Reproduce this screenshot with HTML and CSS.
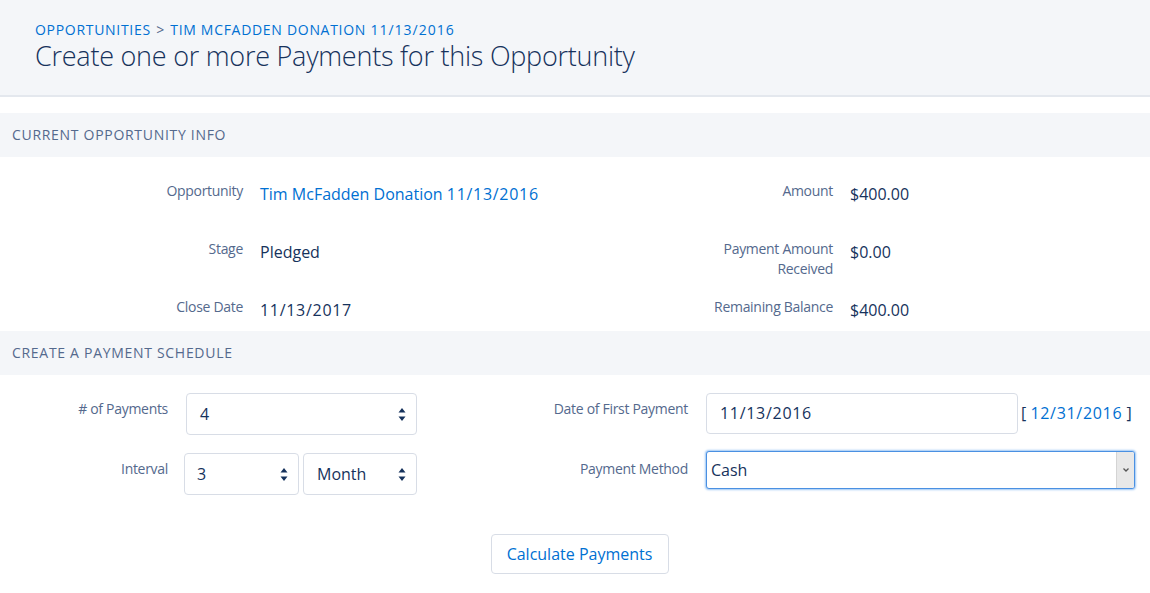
FILE: index.html
```html
<!DOCTYPE html>
<html lang="en">
<head>
<meta charset="utf-8">
<title>Create Payments</title>
<link rel="stylesheet" href="styles.css">
</head>
<body>
<header class="page-header">
  <nav class="crumbs"><a href="#">Opportunities</a> <span class="sep">&gt;</span> <a href="#">Tim McFadden Donation <span class="dt">11/13/2016</span></a></nav>
  <h1 class="title">Create one or more Payments for this Opportunity</h1>
</header>

<section class="section">
  <h2 class="section-title">Current Opportunity Info</h2>
  <div class="info-grid">
    <div class="lbl">Opportunity</div>
    <div class="val"><a href="#">Tim McFadden Donation <span class="dt">11/13/2016</span></a></div>
    <div class="lbl">Amount</div>
    <div class="val">$400.00</div>

    <div class="lbl">Stage</div>
    <div class="val">Pledged</div>
    <div class="lbl">Payment Amount<br>Received</div>
    <div class="val">$0.00</div>

    <div class="lbl">Close Date</div>
    <div class="val"><span class="dt">11/13/2017</span></div>
    <div class="lbl">Remaining Balance</div>
    <div class="val">$400.00</div>
  </div>
</section>

<section class="section">
  <h2 class="section-title">Create a Payment Schedule</h2>
  <div class="form-grid">
    <div class="flbl"># of Payments</div>
    <div class="fctl">
      <div class="box spin wide"><span>4</span>
        <svg class="arrows" width="8" height="15" viewBox="0 0 8 15"><path d="M4 1 L7.5 5.5 L0.5 5.5 Z M0.5 9.5 L7.5 9.5 L4 14 Z" fill="#16325c"/></svg>
      </div>
    </div>
    <div class="flbl">Date of First Payment</div>
    <div class="fctl date-row">
      <div class="box date"><span class="dt">11/13/2016</span></div>
      <span class="bracket">[ <a href="#" class="dt">12/31/2016</a> ]</span>
    </div>

    <div class="flbl">Interval</div>
    <div class="fctl interval">
      <div class="box spin num"><span>3</span>
        <svg class="arrows" width="8" height="15" viewBox="0 0 8 15"><path d="M4 1 L7.5 5.5 L0.5 5.5 Z M0.5 9.5 L7.5 9.5 L4 14 Z" fill="#16325c"/></svg>
      </div>
      <div class="box spin unit"><span>Month</span>
        <svg class="arrows" width="8" height="15" viewBox="0 0 8 15"><path d="M4 1 L7.5 5.5 L0.5 5.5 Z M0.5 9.5 L7.5 9.5 L4 14 Z" fill="#16325c"/></svg>
      </div>
    </div>
    <div class="flbl">Payment Method</div>
    <div class="fctl">
      <div class="select"><span class="sel-text">Cash</span>
        <span class="sel-btn"><svg width="8" height="6" viewBox="0 0 8 6"><path d="M1.5 1.5 L4 4 L6.5 1.5" fill="none" stroke="#555" stroke-width="1.3"/></svg></span>
      </div>
    </div>
  </div>
  <div class="actions">
    <button class="btn" type="button">Calculate Payments</button>
  </div>
</section>
</body>
</html>
```

FILE: styles.css
```css
* { box-sizing: border-box; }
html, body { margin: 0; padding: 0; }
body {
  width: 1150px;
  font-family: "Open Sans", "Noto Sans", sans-serif;
  color: #16325c;
  background: #ffffff;
}
a { color: #0070d2; text-decoration: none; }
.dt { letter-spacing: 0.7px; }

.page-header {
  background: #f4f6f9;
  border-bottom: 2px solid #e4e8ee;
  height: 97px;
  padding: 21px 0 0 35px;
}
.crumbs {
  font-size: 14px;
  line-height: 18px;
  text-transform: uppercase;
  letter-spacing: 0.7px;
}
.crumbs .dt { letter-spacing: 1px; }
.crumbs .sep { color: #54698d; padding: 0 1px; }
.title {
  margin: 0;
  font-size: 27px;
  line-height: 34px;
  font-weight: 300;
  letter-spacing: -0.25px;
  color: #16325c;
}

.section { margin-top: 16px; }
.section + .section { margin-top: 0; }
.section-title {
  margin: 0;
  background: #f4f6f9;
  height: 44px;
  line-height: 44px;
  padding-left: 12px;
  font-size: 14px;
  font-weight: 400;
  color: #54698d;
  text-transform: uppercase;
  letter-spacing: 0.7px;
}

.info-grid {
  display: grid;
  grid-template-columns: 243px 373px 183px 1fr;
  grid-template-rows: 58px 58px 34px;
  column-gap: 17px;
  padding-top: 24px;
}
.lbl {
  text-align: right;
  font-size: 14px;
  line-height: 20px;
  letter-spacing: -0.3px;
  color: #54698d;
}
.val {
  font-size: 16px;
  line-height: 20px;
  padding-top: 3px;
  color: #16325c;
}

.form-grid {
  display: grid;
  grid-template-columns: 168px 232px 252px 430px;
  grid-template-rows: 60px 50px;
  column-gap: 18px;
  padding-top: 18px;
}
.flbl {
  text-align: right;
  font-size: 14px;
  line-height: 20px;
  letter-spacing: -0.3px;
  color: #54698d;
  padding-top: 6px;
}
.fctl { display: flex; align-items: flex-start; }
.box {
  display: flex;
  align-items: center;
  justify-content: space-between;
  border: 1px solid #d8dde6;
  border-radius: 4px;
  background: #fff;
  height: 42px;
  font-size: 16px;
  color: #16325c;
  padding: 0 10px 0 13px;
}
.box.wide { width: 231px; }
.interval { gap: 4px; margin-left: -2px; }
.box.num { width: 115px; height: 42px; padding-left: 12px; }
.box.unit { width: 114px; height: 42px; }
.arrows { display: block; }
.date-row { align-items: center; height: 40px; }
.box.date { width: 312px; height: 41px; padding-left: 13px; }
.bracket {
  margin-left: 3px;
  font-size: 16px;
  color: #16325c;
}
.select {
  display: flex;
  align-items: center;
  width: 429px;
  height: 38px;
  border: 1px solid #4a90e2;
  border-radius: 3px;
  box-shadow: 0 0 2px 1px #9cc6f4;
  background: #fff;
  margin-top: -2px;
  overflow: hidden;
}
.sel-text {
  flex: 1;
  padding-left: 4px;
  font-size: 16px;
  color: #16325c;
}
.sel-btn {
  width: 18px;
  height: 100%;
  background: #e8e8e8;
  border-left: 1px solid #d4d4d4;
  display: flex;
  align-items: center;
  justify-content: center;
}

.actions {
  display: flex;
  justify-content: center;
  padding: 31px 0 0 9px;
}
.btn {
  font-family: inherit;
  font-size: 16px;
  color: #0070d2;
  background: #fff;
  border: 1px solid #d8dde6;
  border-radius: 4px;
  width: 178px;
  height: 40px;
  padding: 0;
}
```
